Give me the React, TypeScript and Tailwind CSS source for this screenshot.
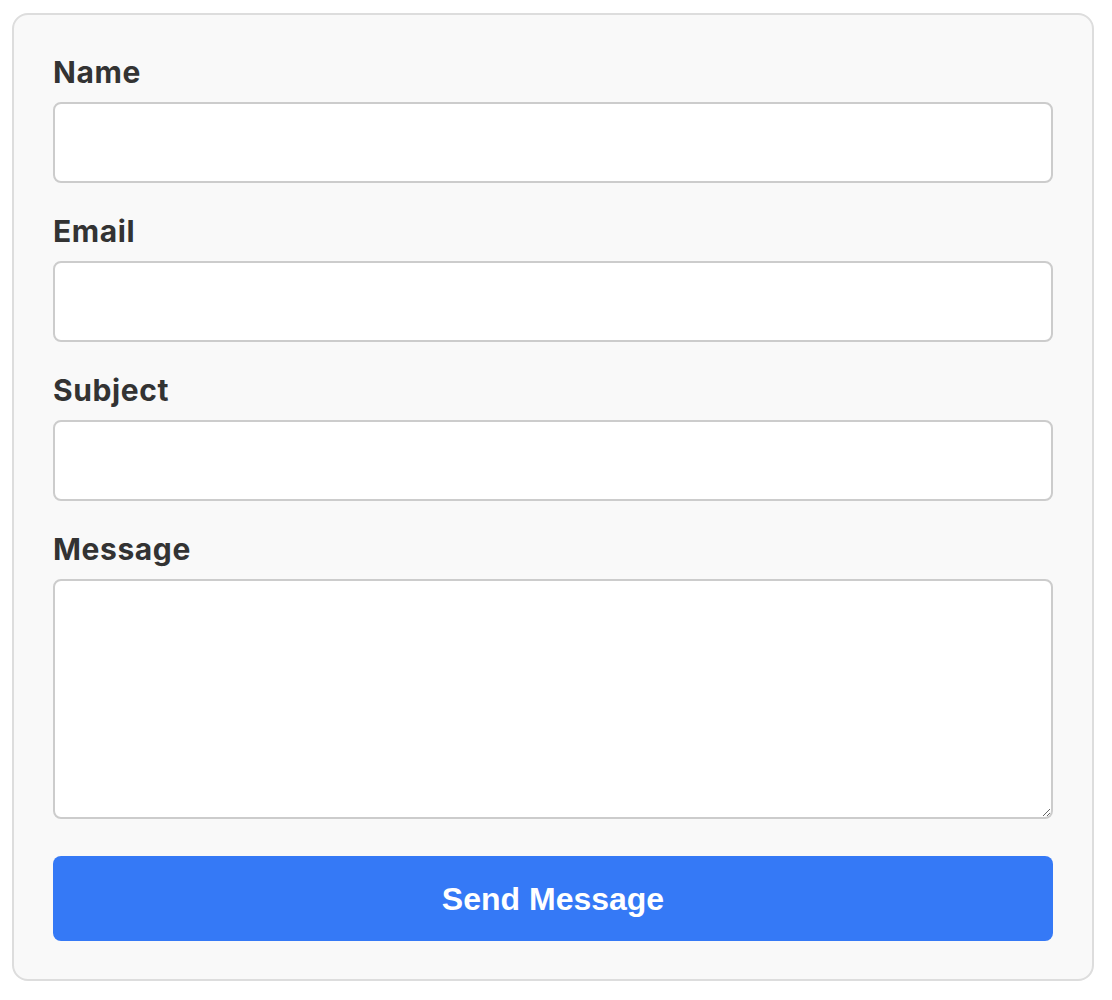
export default function App() {
  const fields = ["Name", "Email", "Subject"];
  const labelCls =
    "mb-[13px] block text-[30px] font-bold leading-[34px] tracking-[0.6px] text-[#333333]";
  const labelStyle = { fontFamily: "Inter, 'Noto Sans', sans-serif" };
  return (
    <div className="min-h-[1000px] bg-white pt-[13px] pl-[12px]">
      <div className="w-[1082px] rounded-[16px] border-2 border-[#dddddd] bg-[#f9f9f9] px-[39px] pt-[40px] pb-[38px]">
        {fields.map((f) => (
          <div key={f} className="mb-[31px]">
            <label className={labelCls} style={labelStyle}>
              {f}
            </label>
            <input
              type="text"
              className="block h-[81px] w-full rounded-[8px] border-2 border-[#cccccc] bg-white px-4 text-[28px] outline-none"
            />
          </div>
        ))}
        <div className="mb-[37px]">
          <label className={labelCls} style={labelStyle}>
            Message
          </label>
          <textarea className="block h-[240px] w-full resize-y rounded-[8px] border-2 border-[#cccccc] bg-white p-4 text-[28px] outline-none" />
        </div>
        <button
          className="block h-[85px] w-full rounded-[8px] bg-[#3579f6] text-[32px] font-bold text-white"
          style={{ fontFamily: "'Liberation Sans', Arial, sans-serif" }}
        >
          Send Message
        </button>
      </div>
    </div>
  );
}
